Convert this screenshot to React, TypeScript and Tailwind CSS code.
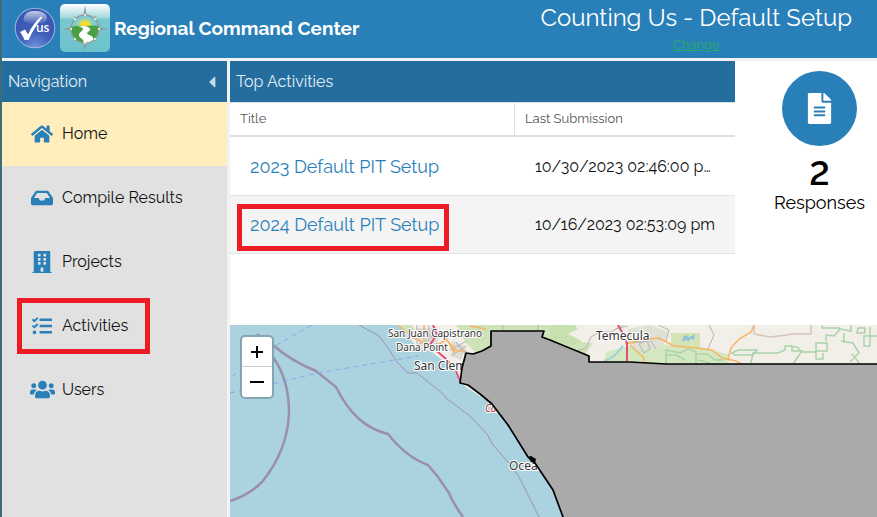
import { FaBuilding, FaCaretLeft, FaFileAlt, FaHome, FaInbox, FaTasks, FaUsers } from "react-icons/fa";

const navItems = [
  { label: "Home", icon: FaHome, active: true },
  { label: "Compile Results", icon: FaInbox },
  { label: "Projects", icon: FaBuilding },
  { label: "Activities", icon: FaTasks, marked: true },
  { label: "Users", icon: FaUsers },
];

const activities = [
  { title: "2023 Default PIT Setup", date: "10/30/2023 02:46:00 p…" },
  { title: "2024 Default PIT Setup", date: "10/16/2023 02:53:09 pm", marked: true },
];

const CheckLogo = () => (
  <svg viewBox="0 0 42 42" className="size-[42px]" aria-hidden="true">
    <defs>
      <linearGradient id="gloss" x1="0" y1="0" x2="0" y2="1">
        <stop offset="0" stopColor="#fff" stopOpacity="0.7" />
        <stop offset="1" stopColor="#fff" stopOpacity="0.05" />
      </linearGradient>
      <radialGradient id="ball" cx="0.5" cy="1" r="0.8">
        <stop offset="0" stopColor="#6f92dc" />
        <stop offset="0.5" stopColor="#3f5fbb" />
        <stop offset="1" stopColor="#3a57b2" />
      </radialGradient>
    </defs>
    <circle cx="21" cy="21" r="20.3" fill="#9fb6dd" />
    <circle cx="21" cy="21" r="19.3" fill="url(#ball)" />
    <path d="M10 10C12 5 16 4 21 4s10 1 12 6c1 4-3 7-12 7S8 14 10 10z" fill="url(#gloss)" />
    <path d="M6 25l5-2.500 3 5C17 20 22 14 27 9.500l1.500 .7C23 17 18 25 14.500 33h-4c-1-3-2.500-5-4.500-8z" fill="#fff" />
    <text x="22" y="25" fill="#fff" fontSize="12" fontWeight="600" fontFamily="Open Sans, sans-serif">us</text>
  </svg>
);

const CompassLogo = () => (
  <svg viewBox="0 0 50 48" className="h-12 w-[50px]" aria-hidden="true">
    <defs>
      <linearGradient id="tile" x1="0" y1="0" x2="0" y2="1">
        <stop offset="0" stopColor="#fff" />
        <stop offset="0.28" stopColor="#a5dade" />
        <stop offset="0.32" stopColor="#79c8cf" />
        <stop offset="1" stopColor="#6cc2ca" />
      </linearGradient>
      <clipPath id="dial">
        <circle cx="25" cy="25" r="13.500" />
      </clipPath>
    </defs>
    <rect width="50" height="48" rx="5" fill="url(#tile)" />
    <path
      d="M25 1l1.500 10h-3zM25 48l1.500-9h-3zM2 25l9-1.500v3zM48 25l-9-1.500v3zM13.500 11.500l4 3-2 2zM36.500 11.500l-4 3 2 2zM13.500 37.500l2-4 2 2zM36.500 37.500l-4-2 2-2z"
      fill="#8e9a9d"
    />
    <circle cx="25" cy="25" r="14" fill="#7dcbd3" stroke="#929da0" strokeWidth="1.500" />
    <g clipPath="url(#dial)">
      <circle cx="25" cy="22" r="8" fill="#a5d6a0" />
      <circle cx="25" cy="22" r="5.500" fill="#f2dc2e" />
      <path d="M11 23q7-2 14-1 8-1 15 0v18H11z" fill="#4ba043" />
      <path d="M18 22.500c6-1.500 13 0 12 3.500-1 2-4 2.500-2.500 4 2 1.500 6 2 6 5.500 0 2-2 3-3.500 4h-8c2-2 2-3 0-4.500-2-1.500-3.500-2.500-3-4.500.5-2.500 4.500-4 4-6-1-1.500-3-1.500-5-2z" fill="#fff" />
    </g>
    <g fill="#fff">
      <circle cx="25" cy="11" r="1" />
      <circle cx="25" cy="39" r="1" />
      <circle cx="11" cy="25" r="1" />
      <circle cx="39" cy="25" r="1" />
      <circle cx="15" cy="15" r="1" />
      <circle cx="35" cy="15" r="1" />
      <circle cx="15" cy="35" r="1" />
      <circle cx="35" cy="35" r="1" />
    </g>
  </svg>
);

const Header = () => (
  <header className="flex h-[58px] items-start justify-between bg-[#2980b9] pr-[25px] text-white">
    <div className="flex items-center gap-1 pt-1 pl-3">
      <CheckLogo />
      <CompassLogo />
      <h1 className="text-[19px] font-bold">Regional Command Center</h1>
    </div>
    <div className="text-center">
      <div className="text-2xl leading-9">Counting Us - Default Setup</div>
      <a href="#change" className="block text-[13px] leading-[18px] text-[#27ae60] underline">
        Change
      </a>
    </div>
  </header>
);

const Sidebar = () => (
  <aside className="w-[225px] shrink-0 bg-[#e1e1e1]">
    <div className="flex h-[41px] items-center justify-between bg-[#246e9f] px-[6px] text-base text-[#e4edf3]">
      <h2>Navigation</h2>
      <button aria-label="Collapse navigation" className="text-[#c8dbe7]">
        <FaCaretLeft className="size-[18px]" />
      </button>
    </div>
    <nav>
      {navItems.map(({ label, icon: Icon, active, marked }) => (
        <a
          key={label}
          href="#nav"
          className={`relative flex h-16 items-center gap-2 pl-7 text-base text-[#111] ${active ? "bg-[#ffeebc]" : ""}`}
        >
          <span className="flex w-6 justify-center pb-px text-[#2980b9]">
            <Icon className={label === "Users" ? "size-[25px] shrink-0" : label === "Activities" ? "size-5" : "size-[22px]"} />
          </span>
          {label}
          {marked && <span className="absolute inset-y-1 left-[15px] w-[133px] border-5 border-[#ed1c24]" />}
        </a>
      ))}
    </nav>
  </aside>
);

const ActivityTable = () => (
  <section className="min-w-0 flex-1">
    <h2 className="h-[41px] bg-[#246e9f] px-[6px] text-base leading-[41px] text-[#e4edf3]">Top Activities</h2>
    <table className="w-full table-fixed border-separate border-spacing-0 border-b border-[#e4e4e4] text-left">
      <thead>
        <tr className="h-[35px] text-[13px] text-[#555]">
          <th className="border-t border-r border-b-2 border-[#e0e0e0] px-[10px] font-normal">Title</th>
          <th className="w-[220px] border-t border-b-2 border-[#e0e0e0] px-[10px] font-normal">Last Submission</th>
        </tr>
      </thead>
      <tbody>
        {activities.map(({ title, date, marked }) => (
          <tr key={title} className={`h-[58px] ${marked ? "bg-[#f4f4f4]" : ""}`}>
            <td className={`border-t px-5 ${marked ? "border-[#e4e4e4]" : "border-transparent"}`}>
              <span className="relative text-lg text-[#2980b9]">
                <a href="#activity">{title}</a>
                {marked && <span className="absolute -top-[10px] -right-[10px] -left-[13px] h-[47px] border-5 border-[#ed1c24]" />}
              </span>
            </td>
            <td className={`truncate border-t px-5 text-base text-[#111] ${marked ? "border-[#e4e4e4]" : "border-transparent"}`}>
              {date}
            </td>
          </tr>
        ))}
      </tbody>
    </table>
  </section>
);

const ResponseCount = () => (
  <section className="flex w-[142px] shrink-0 flex-col items-center pt-[10px] pl-[27px] text-black">
    <div className="flex size-[75px] items-center justify-center rounded-full bg-[#2980b9] text-white">
      <FaFileAlt className="size-[31px]" />
    </div>
    <div className="mt-2 text-[34px] leading-[39px] font-semibold lining-nums">2</div>
    <div className="text-lg leading-5">Responses</div>
  </section>
);

const RegionMap = () => (
  <section className="relative flex-1 overflow-hidden bg-[#aad3df]">
    <svg viewBox="0 0 647 192" preserveAspectRatio="xMinYMin slice" className="block min-h-[192px] w-full" fill="none">
      {/* land */}
      <path d="M168 0l9 10 10 12 15 5 13 10 10 10 5 11 30 20 387-20V0z" fill="#f2efe9" />
      <path d="M226 0h121l-16 9 18 8 14 1-8 12-50 10-55-8-14-14zM170 0h12l4 7-8 3z" fill="#cfe3b8" />
      <path d="M320 0h24l4 4-10 5 14 7-10 5-22-7z" fill="#c6e0b0" />
      <path d="M376 27l30-8 45 1 10 11-18 8h-70zM436 24l34-2 30 8-2 10h-62z" fill="#d3e8c0" />
      <path d="M441 8h29v14h-29z" fill="#d5e4b3" />
      <path d="M453 12l3-2 3 2 6-3-1 6-4-1-1 3-3-2-4 2z" fill="#8fc6dd" />
      <path d="M186 3h22v22h-18zM222 16l14 5-5 14-10-4z" fill="#dedbd5" />
      <path d="M398 4l22-4 18 7-6 16-25 3-9-8z" fill="#dfe2d3" />

      {/* roads */}
      <g stroke="#b5b3bb" strokeWidth="1">
        <path d="M187 0v20l12-5V0M185 12h26M219 25l18-9M221 31l15-10M226 17l11 14M345 27l11-4 5-11 8-5h12l12-7M428 0l11 5-3 11-10-3M479 0l5 10-6 14M409 19l8-4 3 9-6 4z" />
        <path d="M385 4l13-3M402 18l19-2 5 8M196 8l8 5M228 21l9 6" />
      </g>
      <g stroke="#f7b565" strokeWidth="1.500">
        <path d="M168 0l14 12 20 10 15-7 8 10 10 2M194 0v18M214 10l11 18M240 1l16 3" />
        <path d="M395 19l22-5 12-1 15 8 22 2 16 2 10 8 14 3 10 5M524 0l-3 7-12 7-8 9-3 11M400 20l13 12 2 6" />
      </g>
      <path d="M203 0l4 9-7 11 16 14 10 12 4 10M388 0l5 9 4 9v18" stroke="#dc5277" strokeWidth="2" />
      <path d="M375 36l9-5 9-10" stroke="#9fcfe0" strokeWidth="2" />
      <g stroke="#a9d3a9" strokeWidth="1.500">
        <path d="M273 0v6M308 0v6M436 39V25l14 3 8-4 8 3v12M436 30h10l9 5M467 29h10l8 6h8M468 35l12 3M502 28l6-3h19l-4 5h-18zM521 38l2-10h25l7-3V21h7v5h10l-9 13M562 26v-4h5l5 5h14v7h7v-6M586 18h11v8h-11zM596 16v-6l8 1 6-7 11 2V0M611 16l12 2 6 10-9 9M614 8v10M622 29l8 10M592 0v3h18M628 3h7v5h-8zM640 2v19h-6V11h13" />
      </g>
      <path d="M524 0v9l16 3 17-2 4-1h20V0" stroke="#d4c4b7" strokeWidth="1.500" />

      {/* water boundaries and ferry lines */}
      <path d="M27 9l16 11q18 16 43 26l20 16q10 20 22 31 13 12 30 16 18 23 40 31l10 12 11 16q4 10 14 24" stroke="#9b8fab" strokeWidth="2.500" />
      <path d="M43 32Q59 55 59 87q-1 38-27 70-13 13-32 19" stroke="#9b8fab" strokeWidth="2.500" />
      <path d="M129 0l20 11 9 12 9 14 11 11h9l25 20 4 5 24 18 17 18 6 11 15 17 10 13 21 42" stroke="#9c92b0" strokeWidth="1" />
      <path d="M82 0L45 21 0 53M0 68l42-9 46-11 100-17" stroke="#87a7e8" strokeWidth="1" strokeDasharray="5 4" />

      {/* labels, the boundary covers the ends of some */}
      <g fill="#333" stroke="#fff" strokeWidth="2" paintOrder="stroke" fontFamily="Noto Sans, sans-serif">
        <text x="158" y="12" fontSize="10">San Juan Capistrano</text>
        <text x="166" y="26" fontSize="10">Dana Point</text>
        <text x="184" y="45" fontSize="12">San Clemente</text>
        <text x="366" y="15" fontSize="12">Temecula</text>
        <text x="279" y="145" fontSize="12">Oceanside</text>
        <text x="255" y="87" fontSize="10" fontStyle="italic" fill="#b22a35">Camp Pendleton</text>
      </g>
      <path
        d="M230 58l2-15 4-15 7 1 9-3 9-5V6h53l-2 6 8 3 39 16v6h41l36 2h230v170H339l-6-17-10-27-18-27-7-6-20-32-16-21-12-10-12-9z"
        fill="#aaa"
        stroke="#000"
        strokeWidth="1.700"
        strokeLinejoin="round"
      />
      <path d="M298 132l3-1 5 3-1 4-4-1z" fill="#000" />
    </svg>
    <div className="absolute top-[10px] left-[10px] flex flex-col rounded-[5px] border-2 border-[#82a7b1] bg-white text-black">
      <button aria-label="Zoom in" className="flex h-[30px] w-[30px] items-center justify-center border-b border-[#ccc]">
        <svg viewBox="0 0 14 14" className="size-[14px]" stroke="currentColor" strokeWidth="2">
          <path d="M1 7h12M7 1v12" />
        </svg>
      </button>
      <button aria-label="Zoom out" className="flex h-[30px] w-[30px] items-center justify-center">
        <svg viewBox="0 0 14 14" className="size-[14px]" stroke="currentColor" strokeWidth="2">
          <path d="M0 7h14" />
        </svg>
      </button>
    </div>
  </section>
);

export default function App() {
  return (
    <div className="flex h-screen min-h-[480px] border-l border-[#5b6040] font-['Raleway','Lato',sans-serif]">
      <div className="flex min-w-0 flex-1 flex-col gap-[3px] border-l border-[#2478b5] bg-[#f2f2f2]">
        <Header />
        <div className="flex min-h-0 flex-1 gap-[3px]">
          <Sidebar />
          <main className="flex min-w-0 flex-1 flex-col bg-white">
            <div className="flex min-h-[264px]">
              <ActivityTable />
              <ResponseCount />
            </div>
            <RegionMap />
          </main>
        </div>
      </div>
    </div>
  );
}
